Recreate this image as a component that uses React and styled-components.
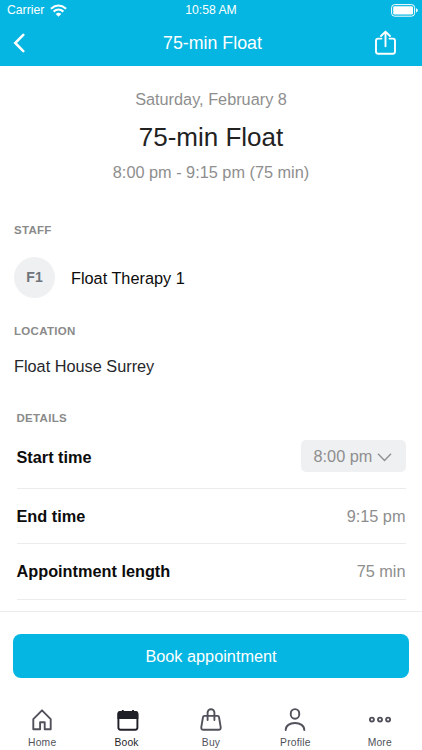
import styled, { createGlobalStyle } from "styled-components";

const GlobalStyle = createGlobalStyle`
  * {
    box-sizing: border-box;
  }

  body {
    margin: 0;
    background: #fff;
    font-family: "Liberation Sans", Arial, sans-serif;
    font-size: 16.3px;
    color: #26272b;
  }

  svg {
    display: block;
    fill: none;
  }
`;

const Screen = styled.div`
  width: 422px;
  height: 750px;
  display: flex;
  flex-direction: column;
  overflow: hidden;
  background: #fff;
`;

const Header = styled.header`
  height: 66px;
  flex-shrink: 0;
  background: #04b6e1;
  color: #fff;
`;

const StatusBar = styled.div`
  display: grid;
  grid-template-columns: 1fr auto 1fr;
  align-items: center;
  height: 20px;
  padding: 0 4px 0 7px;
  font-size: 12.2px;
  line-height: 20px;
`;

const Carrier = styled.div`
  display: flex;
  align-items: center;
  gap: 6px;
`;

const Clock = styled.span`
  padding-right: 3px;
`;

const BatterySlot = styled.div`
  justify-self: end;
`;

const NavBar = styled.nav`
  display: grid;
  grid-template-columns: 1fr auto 1fr;
  align-items: center;
  height: 45px;
  padding: 0 25px 0 13px;
`;

const NavTitle = styled.h1`
  margin: 0;
  padding: 1px 0 0 15px;
  font-size: 17.8px;
  font-weight: 400;
`;

const NavButton = styled.button`
  justify-self: ${(props) => (props.$end ? "end" : "start")};
  padding: 0;
  border: 0;
  background: none;
  color: #fff;
`;

const Content = styled.main`
  flex: 1;
  min-height: 0;
  overflow: hidden;
  padding: 0 14px;
`;

const Summary = styled.section`
  padding-top: 23px;
  text-align: center;
  color: #8e8e8e;
`;

const SummaryLine = styled.p`
  margin: 0;
  line-height: 20px;
`;

const SummaryTitle = styled.h2`
  margin: 11px 0 8px;
  font-size: 26px;
  font-weight: 400;
  line-height: 34px;
  color: #222;
`;

const SectionLabel = styled.h3`
  margin: 0;
  font-size: 11.5px;
  line-height: 16px;
  letter-spacing: 0.3px;
  color: #8a8a8a;
`;

const StaffSection = styled.section`
  padding-top: 40px;
`;

const StaffRow = styled.div`
  display: flex;
  align-items: center;
  gap: 16px;
  margin-top: 19px;
  color: #0c0c0c;
`;

const StaffName = styled.span`
  padding-top: 2px;
`;

const Avatar = styled.div`
  width: 41px;
  height: 41px;
  border-radius: 50%;
  background: #eff0f2;
  color: #70747b;
  font-size: 14px;
  font-weight: 700;
  line-height: 41px;
  text-align: center;
`;

const LocationSection = styled.section`
  padding-top: 25px;
`;

const LocationName = styled.p`
  margin: 17px 0 0;
  line-height: 20px;
`;

const DetailsSection = styled.section`
  padding: 34px 2.5px 0;
`;

const DetailRow = styled.div`
  display: flex;
  align-items: center;
  justify-content: space-between;
  height: ${(props) => props.$height}px;
  border-bottom: 1px solid #ececee;
`;

const DetailName = styled.span`
  font-weight: 700;
  color: #0c0c0c;
`;

const DetailValue = styled.span`
  color: #8e8e8e;
`;

const TimeSelect = styled.button`
  display: flex;
  align-items: center;
  gap: 5px;
  width: 105px;
  height: 32px;
  margin-bottom: 2px;
  padding: 0 0 0 13px;
  border: 0;
  border-radius: 5px;
  background: #eff0f2;
  color: #8e8e8e;
  font: inherit;
`;

const Footer = styled.footer`
  height: 139px;
  flex-shrink: 0;
  padding-top: 22px;
  border-top: 1px solid #ececee;
  background: #fff;
`;

const BookButton = styled.button`
  display: block;
  width: 396px;
  height: 44px;
  margin: 0 auto;
  border: 0;
  border-radius: 8px;
  background: #04b6e1;
  color: #fff;
  font: inherit;
`;

const TabBar = styled.nav`
  display: grid;
  grid-template-columns: repeat(5, 1fr);
  margin-top: 28px;
`;

const Tab = styled.a`
  display: flex;
  flex-direction: column;
  align-items: center;
  gap: 2px;
  font-size: 10.3px;
  line-height: 14px;
  letter-spacing: 0.2px;
  color: ${(props) => (props.$active ? "#1f1f27" : "#50515a")};
`;

const TabIcon = styled.svg`
  width: 28px;
  height: 28px;
  stroke: currentColor;
  stroke-width: 1.9;
`;

const tabs = [
  {
    name: "Home",
    icon: (
      <path
        d="M5.3 23.2V13.1L14 4.3l8.7 8.8v10.1h-6v-6.9h-4.6v6.9z"
        strokeLinejoin="round"
      />
    ),
  },
  {
    name: "Book",
    active: true,
    icon: (
      <>
        <rect x="5.4" y="6" width="19" height="17.8" rx="2.2" />
        <path
          d="M5.4 12V8.2Q5.4 6 7.6 6h14.6q2.2 0 2.2 2.2V12zM9.8 4v3M20 4v3"
          fill="currentColor"
        />
      </>
    ),
  },
  {
    name: "Buy",
    icon: (
      <>
        <path
          d="M7.4 9.9h13.2q1.2 0 1.4 1.2l1.7 10q.3 2.6-2.1 2.6H6.4q-2.4 0-2.1-2.6l1.7-10q.2-1.2 1.4-1.2z"
          strokeLinejoin="round"
        />
        <path
          d="M10.6 14V6.6a3.4 3.4 0 0 1 6.8 0V14"
          strokeLinecap="round"
        />
      </>
    ),
  },
  {
    name: "Profile",
    icon: (
      <>
        <ellipse cx="14" cy="7.9" rx="4.3" ry="4.8" />
        <path
          d="M4.7 24c0-4.3 4-7 9.3-7s9.3 2.7 9.3 7"
          strokeLinecap="round"
        />
      </>
    ),
  },
  {
    name: "More",
    icon: (
      <>
        <circle cx="5.9" cy="13.6" r="2" />
        <circle cx="14" cy="13.6" r="2" />
        <circle cx="22.1" cy="13.6" r="2" />
      </>
    ),
  },
];

function WifiIcon() {
  return (
    <svg width="17" height="13" viewBox="0 0 17 13" stroke="#fff">
      <path d="M.9 4.7q7.6-6.4 15.2 0M3.6 7.6q4.9-4.2 9.8 0" strokeWidth="2.1" />
      <path d="M5.7 9.9q2.8-2.2 5.6 0l-2.8 2.8z" fill="#fff" stroke="none" />
    </svg>
  );
}

function BatteryIcon() {
  return (
    <svg width="27" height="13" viewBox="0 0 27 13">
      <rect x=".6" y=".6" width="23" height="11.6" rx="3" stroke="#fff" />
      <rect x="2.2" y="2.2" width="19.8" height="8.4" rx="1.4" fill="#fff" />
      <path d="M25 4.2q1.8.6 1.8 2.2T25 8.6z" fill="#fff" />
    </svg>
  );
}

function App() {
  return (
    <Screen>
      <GlobalStyle />
      <Header>
        <StatusBar>
          <Carrier>
            Carrier
            <WifiIcon />
          </Carrier>
          <Clock>10:58 AM</Clock>
          <BatterySlot>
            <BatteryIcon />
          </BatterySlot>
        </StatusBar>
        <NavBar>
          <NavButton aria-label="Back">
            <svg width="12" height="20" viewBox="0 0 12 20" stroke="#fff">
              <path
                d="M10.3 1.8 2.2 10l8.1 8.2"
                strokeWidth="2.5"
                strokeLinecap="round"
              />
            </svg>
          </NavButton>
          <NavTitle>75-min Float</NavTitle>
          <NavButton $end aria-label="Share">
            <svg width="23" height="26" viewBox="0 0 23 26" stroke="#fff">
              <path
                d="M7.5 8.6H4.2q-2.2 0-2.2 2.2v10.8q0 2.2 2.2 2.2h14.6q2.2 0 2.2-2.2V10.8q0-2.2-2.2-2.2h-3.3M11.5 16.2V2M7 6l4.5-4.4L16 6"
                strokeWidth="1.9"
                strokeLinecap="round"
                strokeLinejoin="round"
              />
            </svg>
          </NavButton>
        </NavBar>
      </Header>

      <Content>
        <Summary>
          <SummaryLine>Saturday, February 8</SummaryLine>
          <SummaryTitle>75-min Float</SummaryTitle>
          <SummaryLine>8:00 pm - 9:15 pm (75 min)</SummaryLine>
        </Summary>

        <StaffSection>
          <SectionLabel>STAFF</SectionLabel>
          <StaffRow>
            <Avatar>F1</Avatar>
            <StaffName>Float Therapy 1</StaffName>
          </StaffRow>
        </StaffSection>

        <LocationSection>
          <SectionLabel>LOCATION</SectionLabel>
          <LocationName>Float House Surrey</LocationName>
        </LocationSection>

        <DetailsSection>
          <SectionLabel>DETAILS</SectionLabel>
          <DetailRow $height={63}>
            <DetailName>Start time</DetailName>
            <TimeSelect>
              8:00 pm
              <svg width="15" height="11" viewBox="0 0 15 11" stroke="#8e8e8e">
                <path d="m1 2.7 6.5 6.8L14 2.7" strokeWidth="1.3" />
              </svg>
            </TimeSelect>
          </DetailRow>
          <DetailRow $height={55}>
            <DetailName>End time</DetailName>
            <DetailValue>9:15 pm</DetailValue>
          </DetailRow>
          <DetailRow $height={56}>
            <DetailName>Appointment length</DetailName>
            <DetailValue>75 min</DetailValue>
          </DetailRow>
        </DetailsSection>
      </Content>

      <Footer>
        <BookButton>Book appointment</BookButton>
        <TabBar>
          {tabs.map((tab) => (
            <Tab key={tab.name} $active={tab.active}>
              <TabIcon viewBox="0 0 28 28">{tab.icon}</TabIcon>
              {tab.name}
            </Tab>
          ))}
        </TabBar>
      </Footer>
    </Screen>
  );
}

export default App;
